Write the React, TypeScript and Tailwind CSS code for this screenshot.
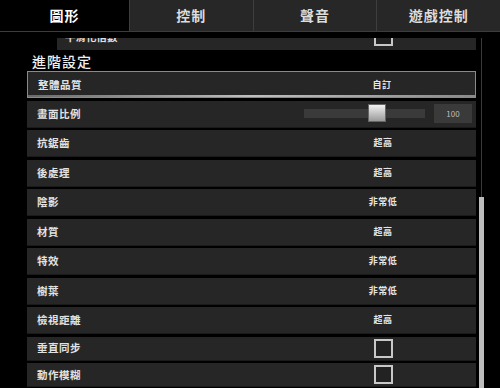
const font = "font-['Noto_Sans_CJK_TC','Noto_Sans',sans-serif]";

const tabs = ["圖形", "控制", "聲音", "遊戲控制"];

type Row =
  | { label: string; kind: "text"; value: string; selected?: boolean }
  | { label: string; kind: "slider"; value: number }
  | { label: string; kind: "check" };

const rows: Row[] = [
  { label: "整體品質", kind: "text", value: "自訂", selected: true },
  { label: "畫面比例", kind: "slider", value: 100 },
  { label: "抗鋸齒", kind: "text", value: "超高" },
  { label: "後處理", kind: "text", value: "超高" },
  { label: "陰影", kind: "text", value: "非常低" },
  { label: "材質", kind: "text", value: "超高" },
  { label: "特效", kind: "text", value: "非常低" },
  { label: "樹葉", kind: "text", value: "非常低" },
  { label: "檢視距離", kind: "text", value: "超高" },
  { label: "垂直同步", kind: "check" },
  { label: "動作模糊", kind: "check" },
];

const Checkbox = () => (
  <div className="w-[19px] h-[19px] border-2 border-[#c8c8c8] bg-[#222]" />
);

const SettingRow = ({ row }: { row: Row }) => {
  const selected = row.kind === "text" && row.selected;
  const h = row.kind === "check" ? "h-[24px]" : "h-[27px]";
  return (
    <div
      className={`relative flex items-center ${h} bg-[#262626] ${
        selected ? "border border-[#8a8a8a]" : "border-b border-[#1a1a1a]"
      }`}
    >
      <div className="flex-1 pl-[10px] text-[10.5px] font-bold tracking-[0.5px] text-[#e2e2e2]">
        {row.label}
      </div>
      <div className="w-[186px] flex items-center justify-center">
        {row.kind === "text" && (
          <span className="text-[9px] font-bold tracking-[0.5px] text-[#e6e6e6]">{row.value}</span>
        )}
        {row.kind === "check" && <Checkbox />}
        {row.kind === "slider" && (
          <div className="flex items-center w-full">
            <div className="relative ml-[14px] w-[121px] h-[9px] bg-[#3a3a3a]">
              <div className="absolute left-[64px] top-[-5px] w-[18px] h-[18px] bg-gradient-to-b from-[#f2f2f2] to-[#9a9a9a] border border-[#666]" />
            </div>
            <div className="ml-[9px] w-[38px] h-[19px] bg-[#3a3a3a] flex items-center justify-center text-[8px] text-[#bdbdbd]">
              {row.value}
            </div>
          </div>
        )}
      </div>
      {selected && (
        <div className="absolute left-0 right-0 bottom-0 h-[2px] bg-gradient-to-r from-[#6a6a6a] via-[#c0c0c0] to-[#8a8a8a]" />
      )}
    </div>
  );
};

export default function App() {
  return (
    <div className={`w-[500px] h-[388px] bg-black overflow-hidden ${font}`}>
      <div className="flex h-[32px] border-b border-[#3c3c3c]">
        {tabs.map((t, i) => (
          <div
            key={t}
            className={`flex items-center justify-center text-[14px] font-bold tracking-[1px] ${
              i === 0
                ? "w-[129px] bg-black text-white"
                : "flex-1 bg-[#272727] text-[#dcdcdc] border-l border-[#3e3e3e]"
            }`}
          >
            {t}
          </div>
        ))}
      </div>
      <div className="flex h-[356px] pt-[6px]">
        <div className="w-[27px]" />
        <div className="w-[449px] h-full overflow-hidden">
          <div className="mt-[-15px]">
            <div className="ml-[30px] h-[27px] bg-[#262626] flex items-center">
              <div className="flex-1 pl-[8px] text-[10.5px] font-bold text-[#e2e2e2]">平滑化倍數</div>
              <div className="w-[186px] flex items-center justify-center">
                <Checkbox />
              </div>
            </div>
            <div className="pl-[5px] pt-[2px] h-[20px] text-[14px] font-medium tracking-[1px] text-[#f0f0f0] leading-[18px]">
              進階設定
            </div>
            <div className="flex flex-col gap-[2.5px] mt-[1px]">
              {rows.map((r) => (
                <SettingRow key={r.label} row={r} />
              ))}
            </div>
          </div>
        </div>
        <div className="ml-[3px] w-[5px] h-full flex flex-col items-center">
          <div className="w-[1px] flex-1 bg-[#3a3a3a]" />
          <div className="w-[5px] h-[191px] bg-[#bdbdbd]" />
        </div>
      </div>
    </div>
  );
}
